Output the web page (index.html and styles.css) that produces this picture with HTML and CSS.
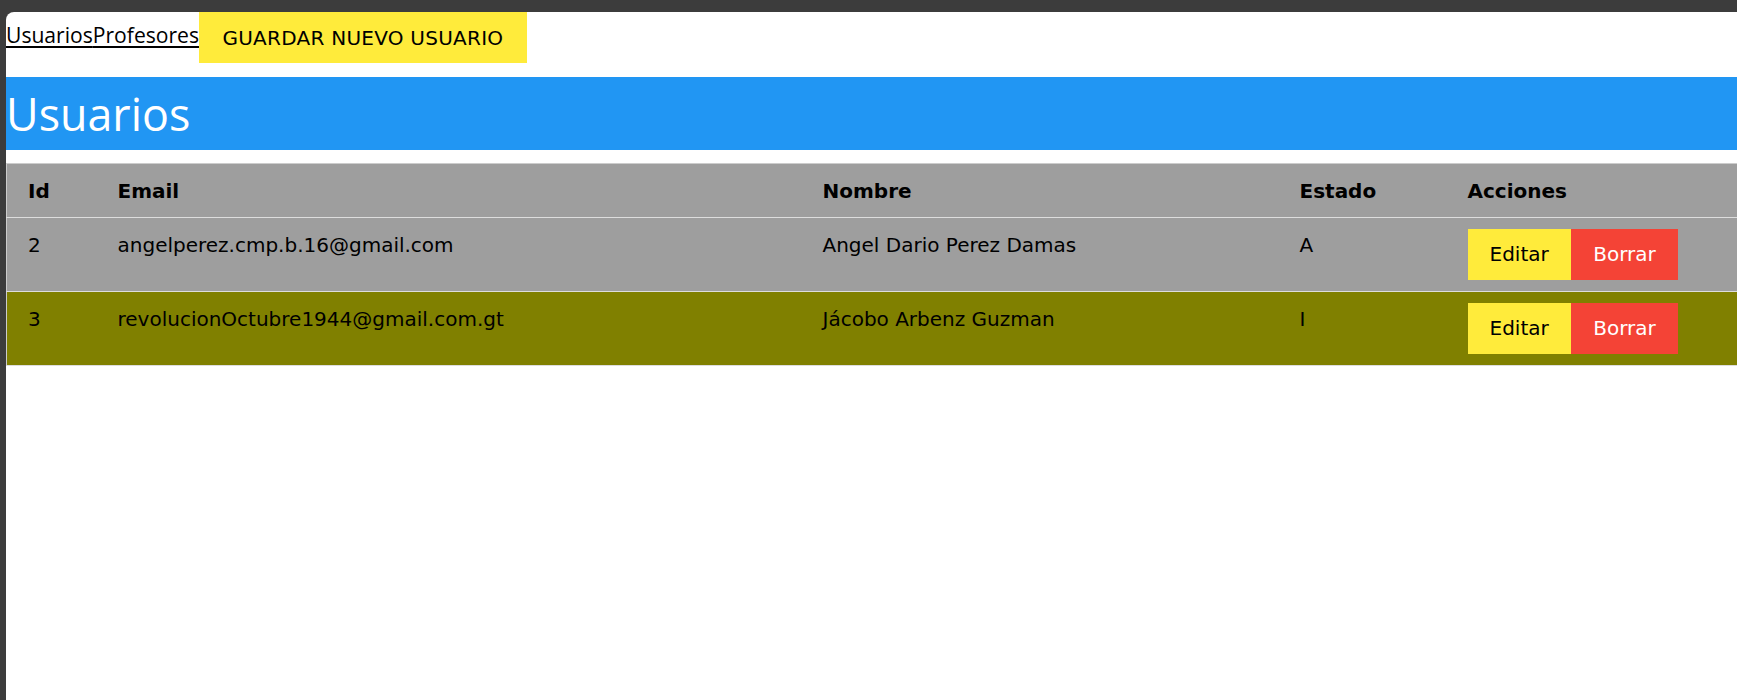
FILE: index.html
```html
<!DOCTYPE html>
<html lang="es">
<head>
<meta charset="utf-8">
<title>Usuarios</title>
<link rel="stylesheet" href="styles.css">
</head>
<body>
<div class="window">
  <nav class="topnav">
    <div class="navlinks"><a href="#" class="navlink">Usuarios</a><a href="#" class="navlink">Profesores</a></div>
    <button class="btn btn-yellow btn-save">GUARDAR NUEVO USUARIO</button>
  </nav>
  <header class="band">
    <h1 class="band-title">Usuarios</h1>
  </header>
  <table class="users">
    <colgroup>
      <col class="col-id">
      <col class="col-email">
      <col class="col-name">
      <col class="col-state">
      <col class="col-actions">
    </colgroup>
    <thead>
      <tr class="row-grey">
        <th>Id</th>
        <th>Email</th>
        <th>Nombre</th>
        <th>Estado</th>
        <th>Acciones</th>
      </tr>
    </thead>
    <tbody>
      <tr class="row-grey">
        <td>2</td>
        <td>angelperez.cmp.b.16@gmail.com</td>
        <td>Angel Dario Perez Damas</td>
        <td>A</td>
        <td><div class="actions"><button class="btn btn-yellow">Editar</button><button class="btn btn-red">Borrar</button></div></td>
      </tr>
      <tr class="row-olive">
        <td>3</td>
        <td>revolucionOctubre1944@gmail.com.gt</td>
        <td>Jácobo Arbenz Guzman</td>
        <td>I</td>
        <td><div class="actions"><button class="btn btn-yellow">Editar</button><button class="btn btn-red">Borrar</button></div></td>
      </tr>
    </tbody>
  </table>
</div>
</body>
</html>
```
FILE: styles.css
```css
* {
  box-sizing: border-box;
}

html, body {
  margin: 0;
  padding: 0;
  height: 100%;
}

body {
  background: #3c3c3c;
  font-family: "DejaVu Sans", Verdana, sans-serif;
  font-size: 20px;
  color: #000;
  overflow: hidden;
}

.window {
  margin: 12px 0 0 6px;
  height: calc(100vh - 12px);
  background: #fff;
  border-top-left-radius: 8px;
  overflow: hidden;
}

.topnav {
  display: flex;
  align-items: flex-start;
}

.navlinks {
  display: flex;
}

.navlink {
  font-family: "Open Sans", "Noto Sans", sans-serif;
  font-size: 21.1px;
  line-height: 46px;
  color: #000;
  text-decoration: underline;
  text-decoration-thickness: 2px;
  text-underline-offset: 3px;
}

.btn {
  display: inline-block;
  border: none;
  margin: 0;
  height: 51px;
  padding: 0 22px;
  font-family: "DejaVu Sans", Verdana, sans-serif;
  font-size: 20px;
  line-height: 51px;
  cursor: pointer;
  white-space: nowrap;
}

.btn-yellow {
  background: #ffeb3b;
  color: #000;
}

.btn-red {
  background: #f44336;
  color: #fff;
  padding: 0 22.5px;
}

.btn-save {
  padding: 0 23.5px;
  letter-spacing: 0.25px;
  line-height: 53px;
}

.band {
  margin-top: 14px;
  height: 73px;
  background: #2196f3;
  color: #fff;
}

.band-title {
  margin: 0;
  padding-top: 1px;
  font-family: "Open Sans", "Noto Sans", sans-serif;
  font-size: 44.8px;
  font-weight: 400;
  line-height: 72px;
}

.users {
  margin-top: 13px;
  width: 100%;
  table-layout: fixed;
  border-collapse: collapse;
  border: 1px solid #ccc;
  border-right: none;
}

.col-id { width: 100px; }
.col-email { width: 705px; }
.col-name { width: 477px; }
.col-state { width: 168px; }

.users tr {
  border-bottom: 1px solid #ddd;
}

.users th,
.users td {
  text-align: left;
  vertical-align: top;
  line-height: 30px;
  padding: 11px 11px;
  white-space: nowrap;
}

.users th {
  font-weight: bold;
  padding-top: 11.5px;
  padding-bottom: 11.5px;
}

.users td {
  padding-top: 12px;
  padding-bottom: 10px;
}

.users td:last-child {
  padding-top: 11px;
  padding-bottom: 11px;
}

.users th:first-child,
.users td:first-child {
  padding-left: 21px;
}

.row-grey {
  background: #9e9e9e;
}

.row-olive {
  background: #808000;
}

.actions {
  display: flex;
}
```
